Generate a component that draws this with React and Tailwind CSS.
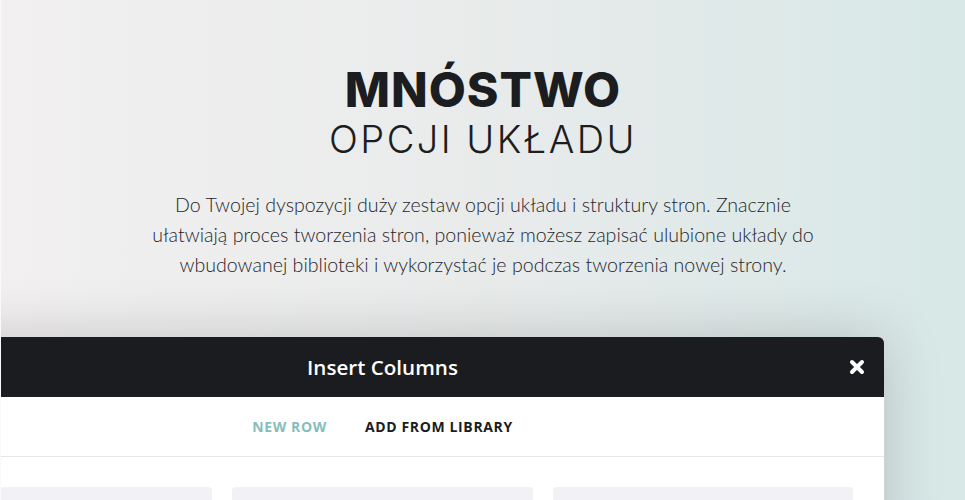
import React from 'react';

function CloseIcon() {
  return (
    <svg viewBox="0 0 16 16" className="w-4 h-4" fill="none">
      <path d="M3 3L13 13M13 3L3 13" stroke="white" strokeWidth="4" strokeLinecap="round" />
    </svg>
  );
}

export default function App() {
  return (
    <div className="w-full h-[500px] overflow-hidden bg-gradient-to-r from-[#f2f0f1] via-[#e9ebeb] to-[#d7e8e7] border-l border-[#fafafa]">
      {/* Heading */}
      <div className="flex flex-col items-center pt-[63px]">
        <h1 className="font-['Inter',sans-serif] font-extrabold text-[48px] leading-[54px] tracking-[0.02em] text-[#1c1d21]">
          MNÓSTWO
        </h1>
        <h2 className="font-['Inter',sans-serif] font-light text-[38px] leading-[44px] tracking-[0.065em] text-[#1c1d21]">
          OPCJI UKŁADU
        </h2>
        <p className="mt-[29px] max-w-[690px] text-center font-['Lato',sans-serif] font-light text-[19.6px] leading-[30px] text-[#25252a]">
          Do Twojej dyspozycji duży zestaw opcji układu i struktury stron. Znacznie ułatwiają proces tworzenia stron, ponieważ możesz zapisać ulubione układy do wbudowanej biblioteki i wykorzystać je podczas tworzenia nowej strony.
        </p>
      </div>

      {/* Insert Columns modal */}
      <div className="mt-[57px] ml-[-120px] w-[1003px] rounded-tr-md bg-white shadow-[0_0_60px_rgba(0,0,0,0.18)] font-['Open_Sans',sans-serif]">
        <div className="relative h-[60px] flex items-center justify-center bg-[#1b1c20] rounded-tr-md">
          <span className="text-white text-[20.6px] font-semibold">Insert Columns</span>
          <button className="absolute right-[19px] top-[22px]">
            <CloseIcon />
          </button>
        </div>
        <div className="h-[60px] flex items-center justify-center gap-[38px] border-b border-[#e6e6e6] text-[14px] font-bold tracking-[0.045em] uppercase">
          <span className="text-[#86bdbb]">New Row</span>
          <span className="text-[#1b1c20]">Add from Library</span>
        </div>
        <div className="grid grid-cols-3 gap-5 px-[31px] pt-[30px]">
          <div className="h-[100px] rounded bg-[#f1f1f6]" />
          <div className="h-[100px] rounded bg-[#f1f1f6]" />
          <div className="h-[100px] rounded bg-[#f1f1f6]" />
        </div>
      </div>
    </div>
  );
}
